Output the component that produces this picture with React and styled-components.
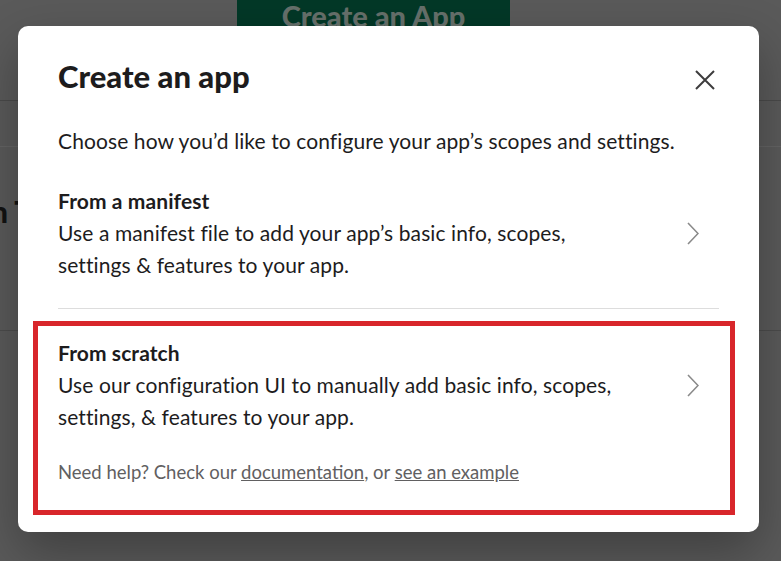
import React from "react";
import styled, { createGlobalStyle } from "styled-components";

const GlobalStyle = createGlobalStyle`
  html, body {
    margin: 0;
    background: #5a5a5a;
  }
  body {
    font-family: Lato, "Open Sans", sans-serif;
  }
`;

const Page = styled.div`
  position: relative;
  width: 100%;
  height: 561px;
  overflow: hidden;
  background: #5a5a5a;
`;

const TopBar = styled.header`
  height: 101px;
  border-bottom: 1px solid #4a4a4a;
  display: flex;
  align-items: flex-start;
  padding-left: 237px;
  box-sizing: border-box;
`;

const LaunchButton = styled.button`
  width: 273px;
  height: 70px;
  margin-top: -20px;
  border: 0;
  background: #033827;
  color: #66706b;
  font-family: Lato, sans-serif;
  font-weight: 900;
  font-size: 29px;
  display: flex;
  align-items: center;
  justify-content: center;
`;

const SubNav = styled.nav`
  height: 45px;
  border-bottom: 1px solid #646464;
`;

const Content = styled.section`
  padding-top: 46px;
`;

const PageHeading = styled.h2`
  margin: 0 0 0 -9px;
  font-size: 30px;
  line-height: 36px;
  font-weight: 900;
  color: #121212;
`;

const PageRule = styled.hr`
  margin: 101px 0 0;
  border: 0;
  border-top: 1px solid #4c4c4c;
`;

const Modal = styled.div`
  position: absolute;
  top: 26px;
  left: 18px;
  width: 741px;
  box-sizing: border-box;
  padding: 32px 40px 17px;
  background: #fff;
  border-radius: 10px;
  box-shadow: 0 20px 50px rgba(0, 0, 0, 0.3);
  color: #1d1c1d;
  font-family: Lato, "Open Sans", sans-serif;
`;

const Header = styled.div`
  display: flex;
  justify-content: space-between;
  align-items: flex-start;
`;

const Title = styled.h1`
  margin: 0;
  font-size: 31px;
  line-height: 36px;
  font-weight: 900;
`;

const CloseButton = styled.button`
  width: 28px;
  height: 28px;
  margin-top: 8px;
  padding: 0;
  border: 0;
  background: none;
  display: flex;
  align-items: center;
  justify-content: center;
  color: #3d3c3d;
  cursor: pointer;
`;

const Lead = styled.p`
  margin: 31px 0 0;
  font-size: 21px;
  line-height: 32px;
  letter-spacing: 0.1px;
`;

const Option = styled.div`
  display: flex;
  align-items: center;
  justify-content: space-between;
  cursor: pointer;
  margin-top: ${(p) => p.$top || 0}px;
`;

const OptionText = styled.div`
  font-size: 21px;
  line-height: 32px;
  letter-spacing: 0.1px;
`;

const OptionTitle = styled.div`
  font-weight: 700;
`;

const Chevron = styled.span`
  display: flex;
  margin-right: 20px;
  color: #8a8a8a;
`;

const Divider = styled.hr`
  margin: 27px 0 0;
  border: 0;
  border-top: 1px solid #dddddd;
`;

const Highlight = styled.div`
  margin: 12px -16px 0 -25px;
  border: 5px solid #d8262b;
  padding: 11px 11px 26px 20px;
`;

const Help = styled.p`
  margin: 27px 0 0;
  font-size: 18.5px;
  line-height: 24px;
  color: #616061;
`;

const HelpLink = styled.a`
  color: #616061;
  text-decoration: underline;
`;

const ChevronIcon = () => (
  <svg width="12" height="23" viewBox="0 0 12 23" fill="none">
    <path d="M1 1 L11 11.5 L1 22" stroke="currentColor" strokeWidth="1.6" />
  </svg>
);

const CloseIcon = () => (
  <svg width="20" height="20" viewBox="0 0 20 20" fill="none">
    <path d="M1 1 L19 19 M19 1 L1 19" stroke="currentColor" strokeWidth="2" />
  </svg>
);

const options = [
  {
    title: "From a manifest",
    lines: [
      "Use a manifest file to add your app’s basic info, scopes,",
      "settings & features to your app.",
    ],
  },
  {
    title: "From scratch",
    lines: [
      "Use our configuration UI to manually add basic info, scopes,",
      "settings, & features to your app.",
    ],
  },
];

const OptionRow = ({ option, top }) => (
  <Option $top={top}>
    <OptionText>
      <OptionTitle>{option.title}</OptionTitle>
      {option.lines.map((line) => (
        <div key={line}>{line}</div>
      ))}
    </OptionText>
    <Chevron>
      <ChevronIcon />
    </Chevron>
  </Option>
);

export default function App() {
  return (
    <>
      <GlobalStyle />
      <Page>
        <TopBar>
          <LaunchButton>Create an App</LaunchButton>
        </TopBar>
        <SubNav />
        <Content>
          <PageHeading>n T</PageHeading>
          <PageRule />
        </Content>

        <Modal role="dialog">
          <Header>
            <Title>Create an app</Title>
            <CloseButton aria-label="Close">
              <CloseIcon />
            </CloseButton>
          </Header>
          <Lead>Choose how you’d like to configure your app’s scopes and settings.</Lead>
          <OptionRow option={options[0]} top={28} />
          <Divider />
          <Highlight>
            <OptionRow option={options[1]} />
            <Help>
              Need help? Check our <HelpLink href="#">documentation</HelpLink>, or{" "}
              <HelpLink href="#">see an example</HelpLink>
            </Help>
          </Highlight>
        </Modal>
      </Page>
    </>
  );
}
